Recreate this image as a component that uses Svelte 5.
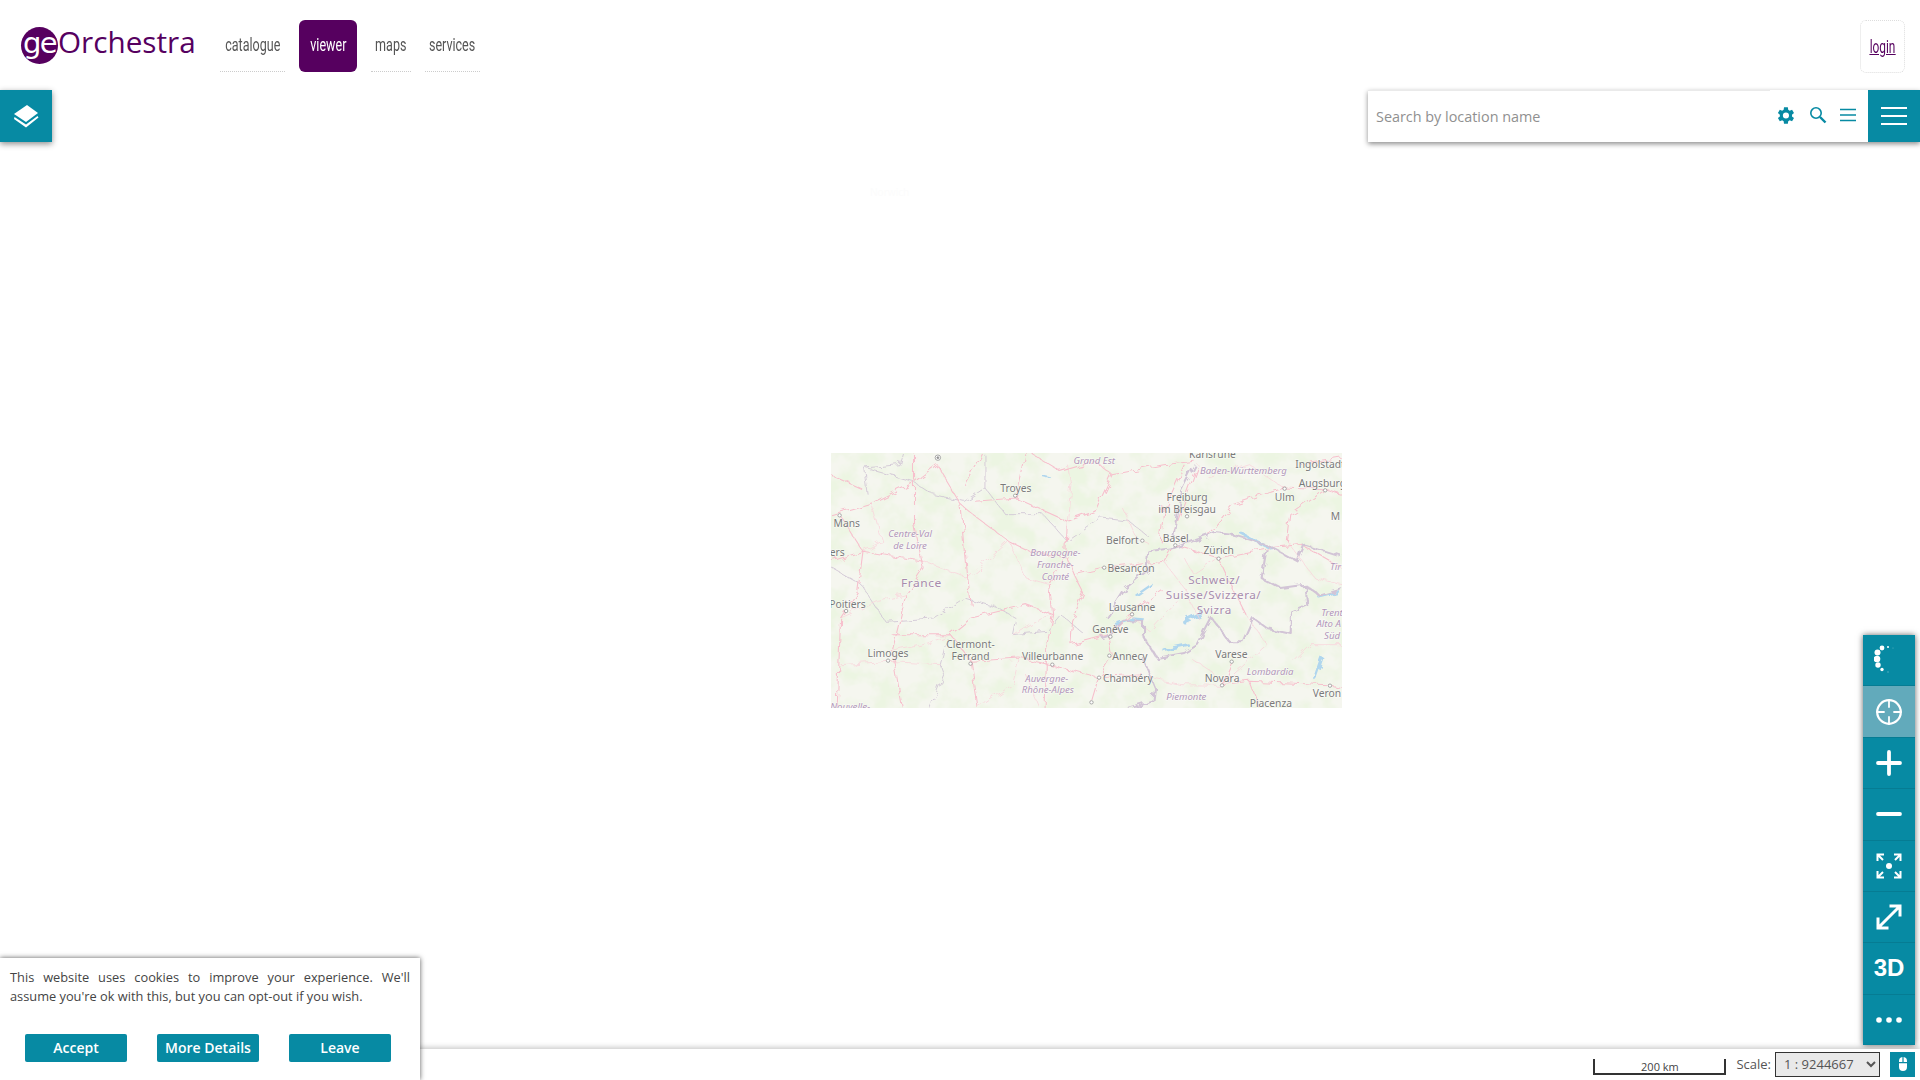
<script>
  const navItems = [
    { label: 'catalogue', width: 65 },
    { label: 'viewer', width: 58, active: true },
    { label: 'maps', width: 40 },
    { label: 'services', width: 55 }
  ];

  // map drawing is in "sheet" units: 1487 x 765 for the 511 x 255 tile
  const roads = [
    '340,60 270,115 150,175 32,210',
    '340,60 410,180 445,210 550,290 610,320 720,340 740,390 830,370',
    '450,170 570,160 720,230 800,200 850,90 800,50',
    '720,230 715,330 670,420 680,510 660,600 655,790',
    '740,390 770,450 735,530 730,600',
    '275,30 275,240 300,370 250,450 210,620 240,790',
    '125,320 110,440 60,520 50,790',
    '32,350 125,320 300,350',
    '125,320 60,215',
    '410,180 430,400 440,480',
    '380,570 440,650 460,790',
    '210,570 380,570 440,520 600,480 680,510',
    '440,650 580,640 670,660 810,700 790,770',
    '730,600 840,570 850,630 810,700 940,690',
    '1060,60 1000,200 990,290',
    '1100,60 1030,260',
    '1350,130 1200,180 1130,270',
    '1030,300 1160,340 1300,310',
    '1160,340 1200,430',
    '840,370 1000,350 1030,300',
    '1200,650 1170,720 1250,710 1480,720 1519,730',
    '1250,710 1280,790',
    '1350,130 1470,135 1519,150',
    '1470,135 1370,210 1360,290',
    '600,25 580,120 570,160',
    '850,90 1000,60 1090,50',
    '1300,310 1400,300 1519,370',
    '1200,430 1240,510',
    '840,570 900,510 1000,440',
    '32,90 120,130',
    '620,30 700,80 800,50',
    '470,25 420,120',
    '1400,60 1519,40'
  ];
  const minorRoads = [
    '150,175 180,290 125,320',
    '60,520 170,470 250,450',
    '300,350 430,400 550,290',
    '550,290 600,400 670,420',
    '560,570 640,520 680,510',
    '460,790 560,720 580,640',
    '210,620 300,600 380,570',
    '60,660 200,650 350,660',
    '880,190 920,280 960,300',
    '1130,100 1250,60 1350,130',
    '1360,290 1440,400 1519,420',
    '1240,510 1300,600 1170,720',
    '1080,640 1140,680 1170,720',
    '960,700 1050,720 1170,722',
    '720,60 730,120 720,230',
    '1000,350 1060,430 1100,520',
    '1380,650 1430,600 1519,600',
    '900,510 960,560 1040,470',
    '1060,340 1090,390 1160,342',
    '600,690 640,790'
  ];
  const regions = [
    '480,30 480,130 540,210 650,210 720,290 820,220 900,230 960,280',
    '130,70 270,110 330,150 420,170 480,130',
    '240,25 230,60 130,70 140,150',
    '35,370 120,420 190,530 330,520 420,460 520,490 570,520 560,570 660,560 700,510 760,560',
    '370,580 350,660 360,690 320,790'
  ];
  const borders = [
    '835,520 890,430 950,380 955,320 1030,310 1150,265 1200,270 1300,300 1390,350 1410,300 1519,335',
    '1300,310 1285,400 1340,430 1410,420 1450,450 1519,430',
    '1410,420 1415,480 1370,500 1370,565 1300,550 1260,520 1230,590 1190,590 1140,520 1100,600 1060,625 980,640 940,570 940,530 880,525 835,575 820,580',
    '940,640 975,730 970,770 900,792',
    '1090,60 1050,140 1030,290'
  ];
  const water = [
    { d: '860,535 900,522 940,526', w: 10 },
    { d: '1225,265 1270,290 1315,310', w: 8 },
    { d: '920,452 965,420', w: 7 },
    { d: '1060,530 1110,505', w: 13 },
    { d: '1000,615 1070,600', w: 8 },
    { d: '1440,700 1460,640', w: 10 },
    { d: '1450,455 1510,440', w: 7 },
    { d: '650,95 670,100', w: 5 }
  ];
  const towns = [
    [568, 153], [57, 212], [938, 288], [827, 369], [1068, 215], [1034, 302], [1160, 342], [1352, 132],
    [1470, 137], [908, 509], [845, 576], [842, 633], [812, 699], [676, 660], [438, 657], [198, 648],
    [76, 499], [1198, 651], [1170, 722], [1484, 723], [790, 773]
  ];
  const cities = [
    ['Karlsruhe', 1142, 40], ['Ingolstadt', 1455, 69], ['Augsburg', 1462, 128], ['Troyes', 570, 141],
    ['Ulm', 1352, 168], ['Freiburg', 1068, 168], ['im Breisgau', 1068, 204], ['Mans', 78, 246],
    ['Belfort', 880, 299], ['Basel', 1035, 292], ['Zürich', 1160, 329], ['ers', 50, 333],
    ['Besançon', 905, 381], ['Lausanne', 908, 500], ['Poitiers', 80, 489], ['Genève', 845, 564],
    ['Clermont-', 438, 611], ['Ferrand', 438, 647], ['Limoges', 198, 636], ['Villeurbanne', 677, 647],
    ['Annecy', 902, 647], ['Varese', 1197, 639], ['Novara', 1170, 711], ['Chambéry', 896, 712],
    ['Veron', 1475, 758], ['Piacenza', 1312, 787], ['M', 1500, 226]
  ];
  const provinces = [
    ['Grand Est', 798, 57], ['Baden-Württemberg', 1232, 87], ['Centre-Val', 262, 276], ['de Loire', 262, 312],
    ['Bourgogne-', 685, 333], ['Franche-', 685, 369], ['Comté', 685, 405], ['Tir', 1500, 375],
    ['Trent', 1490, 513], ['Alto A', 1480, 548], ['Süd', 1490, 584], ['Lombardia', 1310, 691],
    ['Auvergne-', 660, 711], ['Rhône-Alpes', 663, 746], ['Piemonte', 1066, 767], ['Nouvelle-', 88, 795]
  ];
  const countries = [
    ['France', 295, 426, 35], ['Schweiz/', 1147, 419, 34], ['Suisse/Svizzera/', 1145, 464, 34], ['Svizra', 1147, 509, 34]
  ];
</script>

<div class="page">
  <header class="topbar">
    <a class="logo" href="#top">
      <span class="logo-ge">ge</span><span class="logo-name">Orchestra</span>
    </a>
    <nav class="nav">
      {#each navItems as item}
        <a class="nav-item" class:active={item.active} style:width="{item.width}px" href="#top"><span>{item.label}</span></a>
      {/each}
    </nav>
    <a class="login" href="#top"><span>login</span></a>
  </header>

  <main class="map">
    <svg class="tile" viewBox="32 25 1487 765" preserveAspectRatio="none">
      <defs>
        <filter id="forest" x="0" y="0" width="100%" height="100%">
          <feTurbulence type="fractalNoise" baseFrequency="0.014" numOctaves="4" seed="7" />
          <feColorMatrix values="0 0 0 0 0.84  0 0 0 0 0.91  0 0 0 0 0.76  3.2 0 0 0 -1.25" />
        </filter>
        <filter id="wiggle" x="-5%" y="-5%" width="110%" height="110%">
          <feTurbulence type="fractalNoise" baseFrequency="0.035" numOctaves="2" seed="4" result="noise" />
          <feDisplacementMap in="SourceGraphic" in2="noise" scale="26" />
        </filter>
      </defs>
      <rect x="32" y="25" width="1487" height="765" fill="#f5f6ef" />
      <rect x="32" y="25" width="1487" height="765" filter="url(#forest)" />
      <g fill="none" filter="url(#wiggle)">
        <g stroke="#b0d6ee" stroke-linecap="round">
          {#each water as w}
            <polyline points={w.d} stroke-width={w.w} />
          {/each}
        </g>
        <g stroke="#cfc4d4" stroke-width="2.5">
          {#each regions as p}
            <polyline points={p} />
          {/each}
        </g>
        <g stroke="#f9d3da" stroke-width="2.200">
          {#each minorRoads as p}
            <polyline points={p} />
          {/each}
        </g>
        <g stroke="#f7c0cd" stroke-width="3.200">
          {#each roads as p}
            <polyline points={p} />
          {/each}
        </g>
        <g stroke="#d2c4d6" stroke-width="6" stroke-linejoin="round">
          {#each borders as p}
            <polyline points={p} />
          {/each}
        </g>
      </g>
      <g fill="#fff" stroke="#9a9a9a" stroke-width="2.5">
        {#each towns as t}
          <circle cx={t[0]} cy={t[1]} r="5" />
        {/each}
        <circle cx="343" cy="39" r="8" />
        <circle cx="343" cy="39" r="3" fill="#8a8a8a" />
      </g>
      <g class="labels city">
        {#each cities as c}
          <text x={c[1]} y={c[2]}>{c[0]}</text>
        {/each}
      </g>
      <g class="labels province">
        {#each provinces as c}
          <text x={c[1]} y={c[2]}>{c[0]}</text>
        {/each}
      </g>
      <g class="labels country">
        {#each countries as c}
          <text x={c[1]} y={c[2]} font-size={c[3]}>{c[0]}</text>
        {/each}
      </g>
    </svg>
    <span class="ghost-label">Norwich</span>

    <button class="tool layers" aria-label="Layers">
      <svg viewBox="0 0 26 24" width="26" height="24" fill="#fff">
        <path d="M14 1 25 9 13 18 1 10Z" />
        <path d="M1.500 13 13 20.500 24.500 12 25.500 13.500 13 23.500 1 15Z" />
      </svg>
    </button>

    <div class="search">
      <input class="search-input" placeholder="Search by location name" />
      <div class="search-icons">
        <svg viewBox="0 0 24 24" width="21" height="21" fill="#078aa3">
          <path d="M19.4 13a7.500 7.500 0 0 0 0-2l2.300-1.800-2.200-3.800-2.700 1.100a7.500 7.500 0 0 0-1.700-1L14.700 2.600h-4.400L9.900 5.500a7.500 7.500 0 0 0-1.700 1L5.500 5.400 3.300 9.200 5.600 11a7.500 7.500 0 0 0 0 2l-2.300 1.800 2.200 3.800 2.700-1.100a7.500 7.500 0 0 0 1.700 1l.4 2.900h4.400l.4-2.900a7.500 7.500 0 0 0 1.700-1l2.700 1.100 2.200-3.800ZM12.500 15.500a3.500 3.500 0 1 1 0-7 3.500 3.500 0 0 1 0 7Z" />
        </svg>
        <svg viewBox="0 0 18 18" width="18" height="18" fill="none" stroke="#078aa3">
          <circle cx="7" cy="7" r="5.200" stroke-width="1.600" />
          <path d="M11 11l5.500 5.500" stroke-width="2.400" />
        </svg>
        <svg viewBox="0 0 16 14" width="16" height="14" fill="none" stroke="#078aa3" stroke-width="1.300">
          <path d="M0 1.500h16M0 7h16M0 12.500h16" />
        </svg>
      </div>
      <button class="tool menu" aria-label="Menu">
        <svg viewBox="0 0 26 20" width="26" height="20" fill="none" stroke="#fff" stroke-width="2.200">
          <path d="M0 2h26M0 10h26M0 18h26" />
        </svg>
      </button>
    </div>

    <div class="toolbar">
      <button class="tool-btn" aria-label="Loading">
        <svg viewBox="0 0 30 36" width="30" height="36" fill="#fff">
          <circle cx="14" cy="5" r="1" />
          <circle cx="8" cy="6" r="2.400" />
          <circle cx="3.500" cy="10.500" r="3" />
          <circle cx="3" cy="17" r="3.300" />
          <circle cx="4" cy="23" r="2.700" />
          <circle cx="8" cy="27.500" r="1.700" />
          <circle cx="14" cy="30" r="0.700" opacity="0.4" />
          <circle cx="19" cy="6" r="0.500" opacity="0.4" />
        </svg>
      </button>
      <button class="tool-btn locate" aria-label="Locate">
        <svg viewBox="0 0 28 28" width="28" height="28" fill="none" stroke="#fff" stroke-linecap="round">
          <circle cx="14" cy="14" r="11.800" stroke-width="2.200" />
          <path d="M14 2v7M14 19v7M2 14h7M19 14h7" stroke-width="1.800" />
        </svg>
      </button>
      <button class="tool-btn" aria-label="Zoom in">
        <svg viewBox="0 0 26 26" width="26" height="26" fill="none" stroke="#fff" stroke-width="3.800" stroke-linecap="round">
          <path d="M13 2v22M2 13h22" />
        </svg>
      </button>
      <button class="tool-btn" aria-label="Zoom out">
        <svg viewBox="0 0 26 6" width="26" height="6" fill="none" stroke="#fff" stroke-width="3.800" stroke-linecap="round">
          <path d="M2 3h22" />
        </svg>
      </button>
      <button class="tool-btn" aria-label="Zoom to extent">
        <svg viewBox="0 0 26 26" width="26" height="26" fill="none" stroke="#fff" stroke-width="2">
          <circle cx="13" cy="13" r="3" fill="#fff" stroke="none" />
          <path d="M8 1.500H1.500V8M1.500 1.500 7 7M18 1.500h6.500V8M24.500 1.500 19 7M8 24.500H1.500V18M1.500 24.500 7 19M18 24.500h6.500V18M24.500 24.500 19 19" />
        </svg>
      </button>
      <button class="tool-btn" aria-label="Full screen">
        <svg viewBox="0 0 26 26" width="26" height="26" fill="none" stroke="#fff" stroke-width="3">
          <path d="M3 23 23 3M13.500 2H24V12.500M2 13.500V24H12.500" />
        </svg>
      </button>
      <button class="tool-btn label" aria-label="3D">3D</button>
      <button class="tool-btn" aria-label="More">
        <svg viewBox="0 0 26 6" width="26" height="6" fill="#fff">
          <circle cx="3" cy="3" r="2.800" />
          <circle cx="13" cy="3" r="2.800" />
          <circle cx="23" cy="3" r="2.800" />
        </svg>
      </button>
    </div>
  </main>

  <footer class="statusbar">
    <div class="scale-line">200 km</div>
    <label class="scale-label" for="scale">Scale:</label>
    <select id="scale" class="scale-select">
      <option>1 : 9244667</option>
    </select>
    <button class="mouse" aria-label="Mouse position">
      <svg viewBox="0 0 10 14" width="10" height="14" fill="#fff">
        <path d="M4.400 0v5H1V4a4 4 0 0 1 3.400-4ZM5.600 0A4 4 0 0 1 9 4v1H5.600ZM1 6.200h8V10a4 4 0 0 1-8 0Z" />
      </svg>
    </button>
  </footer>

  <aside class="cookies">
    <p>This website uses cookies to improve your experience. We'll assume you're ok with this, but you can opt-out if you wish.</p>
    <div class="cookie-actions">
      <button>Accept</button>
      <button>More Details</button>
      <button>Leave</button>
    </div>
  </aside>
</div>

<style>
  :global(body) {
    margin: 0;
    background: #fff;
    font-family: "Open Sans", "Liberation Sans", sans-serif;
  }

  button {
    border: none;
    padding: 0;
    cursor: pointer;
    font-family: inherit;
  }

  .page {
    position: relative;
    display: flex;
    flex-direction: column;
    height: 1080px;
    overflow: hidden;
  }

  .topbar {
    display: flex;
    align-items: flex-start;
    height: 90px;
    flex-shrink: 0;
    padding: 20px 15px 0 21px;
    box-sizing: border-box;
  }

  .logo {
    display: flex;
    align-items: center;
    width: 199px;
    height: 50px;
    text-decoration: none;
    color: #56005f;
  }

  .logo-ge {
    width: 37px;
    height: 37px;
    border-radius: 50%;
    background: #56005f;
    color: #fff;
    font: 29px/32px "DejaVu Sans", sans-serif;
    letter-spacing: -1.500px;
    text-align: center;
    flex-shrink: 0;
  }

  .logo-name {
    font: 29.700px/1 "Open Sans", sans-serif;
    margin-bottom: 6px;
  }

  .nav {
    display: flex;
    gap: 14px;
  }

  .nav-item {
    display: flex;
    align-items: center;
    justify-content: center;
    height: 52px;
    padding-bottom: 3px;
    box-sizing: border-box;
    border-bottom: 1px dotted #ccc;
    color: #555;
    font: 19px Roboto, "Liberation Sans", sans-serif;
    text-decoration: none;
    white-space: nowrap;
  }

  .nav-item span {
    display: inline-block;
    transform: scaleX(0.66);
  }

  .nav-item.active {
    background: #56005f;
    border: none;
    border-radius: 6px;
    color: #fff;
  }

  .login {
    margin-left: auto;
    display: flex;
    align-items: center;
    justify-content: center;
    width: 45px;
    height: 53px;
    box-sizing: border-box;
    border: 1px dotted #ddd;
    border-radius: 6px;
    color: #56005f;
    font: 18px Roboto, "Liberation Sans", sans-serif;
  }

  .login span {
    display: inline-block;
    transform: scaleX(0.66);
    text-decoration: underline;
  }

  .map {
    position: relative;
    flex: 1;
    min-height: 0;
  }

  .tile {
    position: absolute;
    left: 831px;
    top: 363px;
    width: 511px;
    height: 255px;
  }

  .labels text {
    font-family: "Noto Sans", sans-serif;
    text-anchor: middle;
    paint-order: stroke;
    stroke: rgba(255, 255, 255, 0.7);
    stroke-width: 3px;
  }

  .city text {
    font-size: 30px;
    fill: #7a7a7a;
  }

  .province text {
    font-size: 28px;
    font-style: italic;
    fill: #b196b8;
  }

  .country text {
    fill: #a78bac;
    letter-spacing: 1.500px;
  }

  .ghost-label {
    position: absolute;
    left: 870px;
    top: 95px;
    font: 10px "Noto Sans", sans-serif;
    color: #fcfcfc;
  }

  .tool {
    display: flex;
    align-items: center;
    justify-content: center;
    background: #078aa3;
    box-shadow: 0 2px 6px rgba(0, 0, 0, 0.45);
  }

  .layers {
    position: absolute;
    left: 0;
    top: 0;
    width: 52px;
    height: 52px;
  }

  .search {
    position: absolute;
    right: 0;
    top: 0;
    display: flex;
    align-items: stretch;
    width: 552px;
    height: 52px;
    background: #fff;
    box-shadow: 0 2px 5px rgba(0, 0, 0, 0.45);
  }

  .search::before {
    content: "";
    position: absolute;
    left: 0;
    top: 0;
    width: 402px;
    height: 1px;
    background: #eaeaea;
  }

  .search-input {
    flex: 1;
    min-width: 0;
    border: none;
    outline: none;
    padding: 0 8px;
    font: 14.400px "Open Sans", sans-serif;
    color: #333;
    background: transparent;
  }

  .search-input::placeholder {
    color: #909090;
    opacity: 1;
  }

  .search-icons {
    display: flex;
    align-items: center;
    gap: 13px;
    padding: 0 12px 2px 0;
  }

  .menu {
    width: 52px;
    flex-shrink: 0;
    box-shadow: none;
  }

  .toolbar {
    position: absolute;
    right: 5px;
    top: 545px;
    display: flex;
    flex-direction: column;
    width: 52px;
    height: 410px;
    background: #078aa3;
    box-shadow: 0 0 6px rgba(0, 0, 0, 0.6);
  }

  .tool-btn {
    flex: 1;
    display: flex;
    align-items: center;
    justify-content: center;
    background: #078aa3;
    border-bottom: 1px solid #067c93;
    color: #fff;
  }

  .tool-btn:last-child {
    border-bottom: none;
  }

  .tool-btn.locate {
    background: #62aabb;
  }

  .tool-btn.label {
    font: bold 24px "Liberation Sans", sans-serif;
  }

  .statusbar {
    position: relative;
    display: flex;
    align-items: center;
    justify-content: flex-end;
    height: 31px;
    flex-shrink: 0;
    padding: 0 5px 1px 0;
    box-sizing: border-box;
    background: #fff;
    box-shadow: 0 -2px 5px rgba(0, 0, 0, 0.2);
    font-size: 13px;
    color: #555;
  }

  .scale-line {
    width: 133px;
    height: 16px;
    margin: 6px 10px 0 0;
    box-sizing: border-box;
    border: 2px solid #333;
    border-top: none;
    font: 11px/16px "Open Sans", sans-serif;
    text-align: center;
    color: #444;
  }

  .scale-label {
    margin-right: 4px;
  }

  .scale-select {
    width: 105px;
    height: 25px;
    margin-right: 10px;
    padding: 0 4px;
    background: #e9e9e9;
    border: 1px solid #333;
    border-radius: 0;
    font: 13px "Open Sans", sans-serif;
    color: #555;
  }

  .mouse {
    display: flex;
    align-items: center;
    justify-content: center;
    width: 25px;
    height: 25px;
    background: #078aa3;
  }

  .cookies {
    position: absolute;
    left: 0;
    bottom: 0;
    width: 420px;
    height: 122px;
    padding: 10px;
    box-sizing: border-box;
    background: #fff;
    box-shadow: 0 0 5px rgba(0, 0, 0, 0.65);
  }

  .cookies p {
    margin: 0;
    font-size: 12.800px;
    line-height: 19px;
    color: #444;
    text-align: justify;
  }

  .cookie-actions {
    display: flex;
    gap: 30px;
    margin-top: 28px;
    padding: 0 15px;
  }

  .cookie-actions button {
    width: 102px;
    height: 28px;
    padding-bottom: 2px;
    background: #078aa3;
    border-radius: 2px;
    color: #fff;
    font-size: 14px;
    font-weight: 600;
  }
</style>
